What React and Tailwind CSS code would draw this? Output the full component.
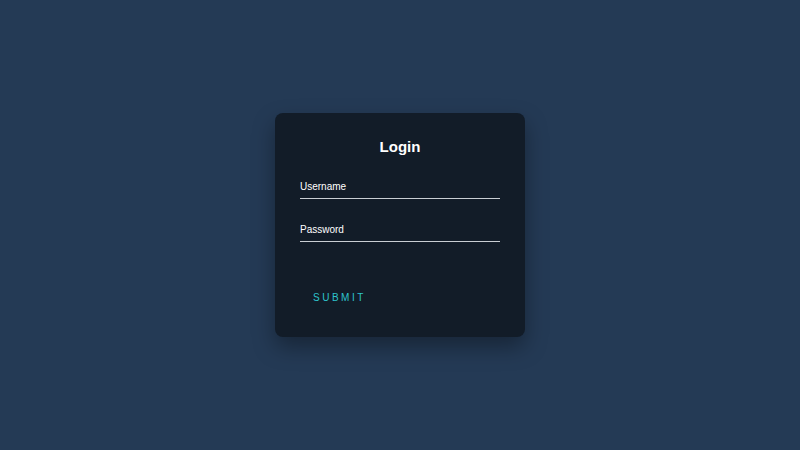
import React from "react";

export default function App() {
  return (
    <div
      className="w-[800px] h-[450px] bg-[#243a55] flex items-center justify-center"
      style={{ fontFamily: '"Liberation Sans", Arial, sans-serif' }}
    >
      <div className="w-[250px] h-[224px] bg-[#121c28] rounded-[8px] shadow-[0_10px_22px_rgba(0,0,0,0.35)] px-[25px] pt-[24px] flex flex-col">
        <h1 className="text-[15px] leading-[20px] font-bold text-white text-center">Login</h1>
        <div className="mt-[23px] border-b border-[#c9ced4] pb-[4px]">
          <div className="text-[10px] leading-[14px] text-white">Username</div>
        </div>
        <div className="mt-[24px] border-b border-[#c9ced4] pb-[4px]">
          <div className="text-[10px] leading-[14px] text-white">Password</div>
        </div>
        <div className="mt-[41px]">
          <button className="px-[13px] py-[8px] text-[10px] leading-[14px] tracking-[2.5px] text-[#2ec4cc] uppercase">
            Submit
          </button>
        </div>
      </div>
    </div>
  );
}
